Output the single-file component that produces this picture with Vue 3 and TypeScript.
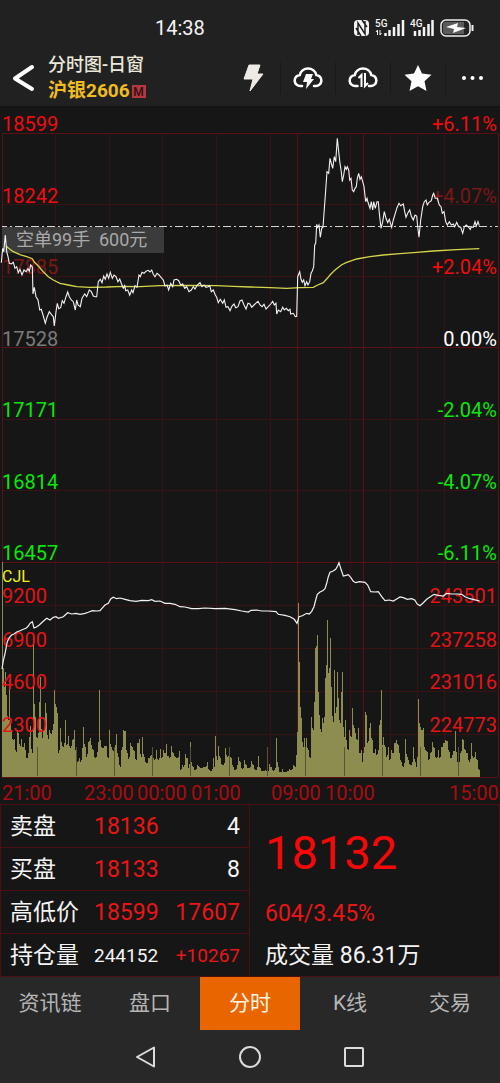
<script setup lang="ts">
import { ref } from 'vue'

type Point = [number, number]

/** Parses "x,y x,y ..." samples, stored at three units per chart pixel. */
function parse(samples: string, ox: number, oy: number): Point[] {
  return samples
    .trim()
    .split(/\s+/)
    .map((pair) => {
      const [x, y] = pair.split(',').map(Number)
      return [ox + x / 3, oy + y / 3] as Point
    })
}

function toPoints(list: Point[]): string {
  return list.map(([x, y]) => `${x.toFixed(1)},${y.toFixed(1)}`).join(' ')
}

// Chart area starts below the header; y is measured from its top edge.
const priceNight =
  '4,458 8,415 11,425 16,375 20,425 24,440 28,460 34,462 40,457 45,475 50,470 55,488 60,478 66,495 72,480 78,485 84,476 88,484 92,465 97,470 99,552 103,532 108,560 114,570 119,600 124,598 130,618 136,640 141,622 148,605 154,613 160,620 163,648 168,605 172,580 176,596 182,593 187,572 192,580 198,560 203,546 208,560 214,570 220,575 226,600 230,570 234,585 241,590 246,565 254,552 260,560 268,540 274,545 280,558 286,560 290,560 295,515 301,508 306,518 311,498 316,508 321,492 326,505 331,487 337,505 342,495 348,500 354,515 359,507 364,520 370,535 374,527 377,542 383,540 389,556 395,540 399,548 405,527 411,532 417,495 421,500 426,487 432,490 438,484 445,481 450,486 455,480 460,493 465,500 471,490 477,495 483,502 490,510 495,528 501,525 506,540 512,520 518,530 522,510 530,508 536,512 542,525 548,522 554,535 560,530 567,545 574,540 580,530 585,537 592,525 600,518 606,530 612,525 618,532 624,530 629,527 634,545 640,540 646,555 650,562 655,578 661,568 668,580 673,570 678,592 684,590 690,602 696,588 702,582 707,593 714,590 720,573 726,570 732,585 738,597 744,580'
const priceDay =
  '0,582 5,592 12,585 17,580 24,574 30,585 36,590 42,583 48,597 55,590 62,582 68,574 73,585 78,580 80,612 85,600 92,605 98,592 103,600 109,595 115,602 120,598 122,612 130,610 136,620 140,619 143,500 149,485 153,508 157,517 161,510 165,527 170,515 174,525 179,515 183,490 187,483 191,470 194,405 197,400 200,343 203,352 207,345 211,382 215,355 219,352 222,310 227,240 231,185 236,190 240,145 244,160 248,175 253,140 257,155 262,85 266,125 270,160 274,185 277,215 281,195 285,170 289,178 292,170 296,180 299,210 303,205 307,240 311,245 315,235 319,230 322,205 326,190 330,208 334,200 338,215 342,230 347,275 351,265 355,280 360,295 364,275 368,300 371,275 376,295 381,275 385,275 388,310 393,355 398,335 403,305 408,325 413,338 418,328 425,352 430,330 436,310 441,293 447,280 452,287 460,282 464,305 468,322 473,310 479,300 484,318 490,330 495,315 500,318 503,350 507,382 512,330 518,290 523,275 528,270 532,285 537,277 544,272 548,255 551,250 556,265 562,265 568,285 573,290 577,310 582,305 587,335 592,345 598,335 604,345 610,342 614,350 620,337 626,350 632,352 638,370 643,350 649,345 656,352 661,358 664,350 670,352 675,335 679,348 684,335 688,347'
const pricePoints = toPoints([...parse(priceNight, 0, 3), ...parse(priceDay, 250, 3)])

const averagePoints = toPoints([
  ...parse('18,408 26,415 40,425 60,434 80,440 97,446 103,456 115,468 130,485 145,500 160,510 180,520 205,525 230,530 270,532 320,531 370,529 420,530 480,527 560,526 650,527 700,529', 0, 3),
  ...parse('0,531 60,533 110,535 150,533 190,532 203,525 220,518 232,505 240,495 255,480 275,464 290,457 320,447 360,440 400,435 450,431 500,427 550,423 620,419 688,416', 250, 3),
])

const interestPoints = toPoints([
  ...parse('6,387 10,362 14,345 18,325 22,305 28,293 35,285 42,282 50,276 60,272 70,268 78,265 85,258 90,250 97,245 102,264 108,262 118,255 128,245 140,235 150,240 160,232 168,230 175,235 190,230 203,218 215,222 228,220 240,223 255,220 265,217 277,212 290,213 300,212 306,205 315,195 325,190 332,177 340,172 350,176 360,174 375,178 390,182 408,184 425,181 445,182 455,179 465,184 480,183 495,190', 0, 433),
  ...parse('15,190 30,193 45,200 60,201 80,206 100,206 120,204 150,206 180,205 210,209 230,213 250,216 258,211 275,210 290,213 310,213 333,215 340,223 360,226 375,230 388,238 396,250 402,230 412,227 425,220 433,222 440,214 447,200 452,180 457,163 465,156 473,152 480,146 485,130 490,110 495,97', 165, 433),
  ...parse('0,97 8,94 17,88 23,77 27,68 33,88 40,108 48,106 55,104 62,112 70,124 77,128 88,125 105,127 113,135 122,155 135,156 145,155 155,170 165,182 178,180 190,183 200,177 210,171 220,173 232,178 245,176 254,180 262,192 270,197 280,188 290,178 300,171 312,163 325,166 340,168 350,160 365,162 380,162 395,163 405,170 420,176 432,179 449,183', 330, 433),
])

const volumeSamples: Point[] = [
  ...parse('8,65 12,440 16,395 20,465 24,540 29,420 34,570 40,600 44,598 48,637 52,570 56,580 60,618 64,598 68,622 72,608 76,630 80,655 84,640 88,590 92,558 96,640 99,285 105,530 109,590 113,595 118,487 122,410 127,595 131,570 136,490 140,520 145,597 149,570 153,582 158,570 163,450 168,500 172,520 176,640 180,565 185,605 190,620 195,540 200,615 205,587 210,625 214,618 218,600 223,570 228,640 233,665 237,655 241,665 246,625 250,560 255,620 260,650 264,605 270,595 275,615 280,630 286,655 292,635 297,450 302,600 306,625 312,617 318,618 324,655 329,570 334,620 340,632 345,615 349,583 354,650 360,680 365,630 370,570 377,572 382,640 386,658 391,610 397,620 403,632 408,660 413,610 418,597 424,650 428,590 433,650 438,670 445,655 450,648 458,620 463,660 469,630 475,660 480,628 485,655 490,630 496,640', 0, 433),
  ...parse('5,612 12,655 18,618 24,640 30,650 36,655 42,633 47,690 52,675 56,680 61,642 66,655 71,685 75,605 80,665 86,680 92,690 98,675 104,680 110,685 116,682 122,680 128,667 134,690 140,692 144,653 148,680 152,588 157,660 161,617 166,655 172,675 177,668 182,623 187,650 192,635 198,655 204,680 210,690 216,675 221,652 227,665 233,688 239,660 245,675 252,685 259,663 265,675 272,690 277,680 281,648 287,685 292,693 300,690 306,695 312,672 318,682 324,692 330,685 335,594 340,680 346,697 352,688 358,697 365,695 372,688 378,690 384,675 390,680 395,645 399,190 402,365 406,500 410,535 414,620 418,595 422,640 425,593 430,630 436,655 440,530 445,570 449,485 452,325 456,285 460,455 464,525 468,575 472,535 476,550 480,415 484,375 487,240 491,400', 165, 433),
  ...parse('1,295 5,440 9,545 13,390 17,520 22,395 26,475 30,550 34,455 38,395 42,590 46,540 50,600 55,630 59,570 63,590 68,505 72,565 77,580 81,600 85,565 89,640 93,630 97,665 101,640 105,515 109,525 113,610 117,565 121,550 126,600 130,640 135,628 140,645 144,630 149,555 153,450 157,615 161,590 165,620 170,650 174,622 179,660 184,630 189,640 194,610 199,600 204,615 209,640 214,665 220,680 226,597 231,650 236,660 241,675 246,665 250,620 255,665 260,680 265,478 270,560 275,570 280,565 285,630 291,635 296,660 302,640 308,605 313,625 318,655 324,630 329,655 335,622 340,610 346,600 352,603 357,635 362,655 368,645 375,573 380,635 385,670 390,640 396,597 401,600 406,630 412,640 418,665 424,610 430,655 436,635 442,660 447,690', 330, 433),
]

const base = 670
/** One column per pixel: samples keep their height, columns between lean to the lower neighbour. */
function buildVolume(): string {
  const tops = new Map<number, number>()
  for (const [x, y] of volumeSamples) {
    const column = Math.floor(x)
    tops.set(column, Math.min(tops.get(column) ?? base, y))
  }
  const filled = [...tops.keys()].sort((a, b) => a - b)
  let path = ''
  for (let i = 0; i < filled.length; i++) {
    const x = filled[i]
    const top = tops.get(x)!
    path += `M${x} ${base}V${top.toFixed(1)}h1V${base}z`
    const next = filled[i + 1]
    if (next === undefined) continue
    const other = tops.get(next)!
    const low = Math.max(top, other) * 0.85 + Math.min(top, other) * 0.15
    for (let gap = x + 1; gap < next; gap++) {
      path += `M${gap} ${base}V${low.toFixed(1)}h1V${base}z`
    }
  }
  return path
}
const volumePath = buildVolume()

const rows = [26, 97, 169, 240, 312, 383, 455, 498, 541, 584, 627, 670]
const strongRows = [26, 240, 455, 670]
const columns = [55, 109, 162, 216, 270, 350, 390, 417, 444]
const strongColumns = [2, 297, 363, 498]
const sessionMarks = [37, 76, 114, 152, 190, 229, 267, 305, 344, 382, 420, 458]

const priceAxis = [
  { y: 24, price: '18599', percent: '+6.11%', tone: 'up', side: 'up' },
  { y: 96, price: '18242', percent: '+4.07%', tone: 'up', side: 'dim' },
  { y: 167, price: '17885', percent: '+2.04%', tone: 'dim', side: 'up' },
  { y: 239, price: '17528', percent: '0.00%', tone: 'flat', side: 'white' },
  { y: 310, price: '17171', percent: '-2.04%', tone: 'down', side: 'down' },
  { y: 382, price: '16814', percent: '-4.07%', tone: 'down', side: 'down' },
  { y: 453, price: '16457', percent: '-6.11%', tone: 'down', side: 'down' },
]
const volumeAxis = [
  { y: 496, left: '9200', right: '243501' },
  { y: 540, left: '6900', right: '237258' },
  { y: 582, left: '4600', right: '231016' },
  { y: 625, left: '2300', right: '224773' },
]
const timeAxis = [
  { x: 2, text: '21:00' },
  { x: 84, text: '23:00' },
  { x: 137, text: '00:00' },
  { x: 191, text: '01:00' },
  { x: 271, text: '09:00' },
  { x: 325, text: '10:00' },
  { x: 449, text: '15:00' },
]

const quotes = [
  { name: '卖盘', value: '18136', extra: '4', kind: 'depth' },
  { name: '买盘', value: '18133', extra: '8', kind: 'depth' },
  { name: '高低价', value: '18599', extra: '17607', kind: 'range' },
  { name: '持仓量', value: '244152', extra: '+10267', kind: 'holding' },
]

const tabs = ['资讯链', '盘口', '分时', 'K线', '交易']
const activeTab = ref('分时')
</script>

<template>
  <div class="screen">
    <div class="status">
      <time class="clock">14:38</time>
      <svg class="indicators" width="120" height="20" viewBox="0 0 120 20" aria-label="NFC 5G 4G">
        <rect x="0" y="2" width="15" height="16" rx="4" fill="#f4f4f4" />
        <path d="M4 17V5l7 11V3M8 2l5 7M2 10l5 8" fill="none" stroke="#202020" stroke-width="1.500" />
        <text x="21" y="9" class="net">5G</text>
        <path d="M23.500 12v5M22 14l1.500-2M26 12v5l1.500-2" stroke="#f4f4f4" fill="none" />
        <path d="M31.500 18v-3M35.500 18v-6M40 18V9M44.500 18V6M49 18V2" stroke="#f4f4f4" stroke-width="2.500" fill="none" />
        <text x="56" y="9" class="net">4G</text>
        <path d="M61 18v-5M65.500 18v-6M70 18V9M74.500 18V6M78.500 18V2" stroke="#f4f4f4" stroke-width="2.500" fill="none" />
        <rect x="87" y="2" width="29" height="16" rx="5" fill="#242424" stroke="#f0f0f0" stroke-width="1.500" />
        <path d="M91 4h19v12H91a2 2 0 0 1-2-2V6a2 2 0 0 1 2-2z" fill="#5b5b5b" />
        <path d="M92 9l12-4-1 4 9 1-13 5 1-4z" fill="#fff" />
        <path d="M118.500 7v6" stroke="#f0f0f0" stroke-width="2" />
      </svg>
    </div>

    <header class="header">
      <button class="back" type="button" aria-label="返回">
        <svg width="24" height="30" viewBox="0 0 24 30"><path d="M20 4L3 15.500 20 26" fill="none" stroke="#fff" stroke-width="4" stroke-linecap="round" stroke-linejoin="round" /></svg>
      </button>
      <div class="heading">
        <h1 class="title">分时图-日窗</h1>
        <div class="contract"><span>沪银2606</span><span class="badge">M</span></div>
      </div>
      <nav class="tools">
        <button type="button" aria-label="闪电下单">
          <svg width="32" height="32" viewBox="0 0 32 32"><path d="M12 3h11l-3 9h6L13 29l3-12H7z" fill="#eeebe6" stroke="#eeebe6" stroke-linejoin="round" /></svg>
        </button>
        <button type="button" aria-label="云条件单">
          <svg width="32" height="32" viewBox="0 0 32 32">
            <path d="M10 24H8.500a5.500 5.500 0 0 1-.7-11 8.500 8.500 0 0 1 16.500 0A5.500 5.500 0 0 1 23.500 24H22" fill="none" stroke="#fff" stroke-width="2.500" stroke-linecap="round" />
            <path d="M14 12h7l-2 5h3l-8 10 1-7h-4z" fill="#fff" />
          </svg>
        </button>
        <button type="button" aria-label="云同步">
          <svg width="32" height="32" viewBox="0 0 32 32">
            <path d="M10.500 24H8.500a5.500 5.500 0 0 1-.7-11 8.500 8.500 0 0 1 16.500 0A5.500 5.500 0 0 1 23.500 24H22" fill="none" stroke="#fff" stroke-width="2.500" stroke-linecap="round" />
            <path d="M14.500 25V13l-3 3M18 11v13l3-3" fill="none" stroke="#fff" stroke-width="2" />
          </svg>
        </button>
        <button type="button" aria-label="收藏">
          <svg width="32" height="32" viewBox="0 0 32 32"><path d="M16 3l4 8.500 9.500 1.200-7 6.500L24.500 29 16 24.300 7.500 29l2-9.800-7-6.500L12 11.500z" fill="#fff" /></svg>
        </button>
        <button type="button" aria-label="更多">
          <svg width="32" height="32" viewBox="0 0 32 32" fill="#fff"><circle cx="7" cy="16" r="2" /><circle cx="15.500" cy="16" r="2" /><circle cx="24" cy="16" r="2" /></svg>
        </button>
      </nav>
    </header>

    <main>
      <svg class="chart" viewBox="0 0 500 697" role="img" aria-label="分时图">
        <g class="grid" shape-rendering="crispEdges">
          <line v-for="y in rows" :key="'r' + y" x1="2" :y1="y" x2="498" :y2="y" :class="{ strong: strongRows.includes(y) }" />
          <line v-for="x in columns" :key="'c' + x" :x1="x" y1="26" :x2="x" y2="670" />
          <line v-for="x in strongColumns" :key="'s' + x" :x1="x" y1="26" :x2="x" y2="670" class="strong" />
        </g>
        <g v-for="row in priceAxis" :key="row.price" class="axis">
          <text x="2" :y="row.y" :class="row.tone">{{ row.price }}</text>
          <text x="497" :y="row.y" text-anchor="end" :class="row.side">{{ row.percent }}</text>
        </g>
        <text x="2" y="475" class="indicator">CJL</text>

        <path :d="volumePath" fill="#8e8d50" shape-rendering="crispEdges" />
        <g class="marks" shape-rendering="crispEdges">
          <line v-for="x in sessionMarks" :key="x" :x1="x" y1="640" :x2="x" y2="669" />
        </g>
        <g v-for="row in volumeAxis" :key="row.left" class="volume">
          <text x="2" :y="row.y">{{ row.left }}</text>
          <text x="497" :y="row.y" text-anchor="end">{{ row.right }}</text>
        </g>
        <g class="times">
          <text v-for="mark in timeAxis" :key="mark.text" :x="mark.x" y="693">{{ mark.text }}</text>
        </g>

        <rect x="2" y="120" width="162" height="26" fill="#3b3b3b" />
        <text x="16" y="139" class="order">空单99手</text>
        <text x="99" y="139" class="order">600元</text>
        <line x1="2" y1="119.500" x2="498" y2="119.500" stroke="#d4d4cc" stroke-dasharray="8 3 2 3" stroke-dashoffset="3" />
        <polyline :points="averagePoints" fill="none" stroke="#d5d54c" stroke-width="1.300" />
        <polyline :points="pricePoints" fill="none" stroke="#f2f2f2" stroke-width="1.100" />
        <polyline :points="interestPoints" fill="none" stroke="#f2f2f2" stroke-width="1.200" />
      </svg>

      <section class="panel">
        <table class="quotes">
          <tbody>
            <tr v-for="quote in quotes" :key="quote.name" :class="quote.kind">
              <th scope="row">{{ quote.name }}</th>
              <td class="value">{{ quote.value }}</td>
              <td class="extra">{{ quote.extra }}</td>
            </tr>
          </tbody>
        </table>
        <div class="summary">
          <strong class="last">18132</strong>
          <span class="change">604/3.45%</span>
          <span class="turnover">成交量 86.31万</span>
        </div>
      </section>
    </main>

    <nav class="tabs">
      <button v-for="tab in tabs" :key="tab" type="button" :class="{ active: tab === activeTab }" @click="activeTab = tab">{{ tab }}</button>
    </nav>

    <div class="system">
      <button type="button" aria-label="Back"><svg width="24" height="24" viewBox="0 0 24 24"><path d="M20 2.500v19L3 12z" /></svg></button>
      <button type="button" aria-label="Home"><svg width="24" height="24" viewBox="0 0 24 24"><circle cx="12" cy="12" r="10" /></svg></button>
      <button type="button" aria-label="Recents"><svg width="24" height="24" viewBox="0 0 24 24"><rect x="3" y="3" width="18" height="18" rx="1" /></svg></button>
    </div>
  </div>
</template>

<style>
body {
  margin: 0;
  background: #282828;
}
</style>

<style scoped>
.screen {
  background: #161616;
  color: #f4f4f4;
  font-family: Roboto, "Noto Sans CJK SC", sans-serif;
}
button {
  display: flex;
  align-items: center;
  justify-content: center;
  padding: 0;
  border: 0;
  background: none;
  color: inherit;
  font: inherit;
  cursor: pointer;
}
.status {
  display: flex;
  align-items: center;
  justify-content: space-between;
  box-sizing: border-box;
  height: 50px;
  padding-top: 6px;
  background: #212121;
}
.clock {
  margin-left: 31%;
  font-size: 20px;
  line-height: 24px;
}
.indicators {
  margin-right: 26px;
}
.net {
  font-size: 10px;
  font-weight: 500;
  fill: #f4f4f4;
}
.header {
  display: flex;
  align-items: center;
  box-sizing: border-box;
  height: 57px;
  padding: 0 0 0 12px;
  border-bottom: 1px solid #141414;
  background: #212121;
}
.heading {
  margin-left: 12px;
  flex: 1;
}
.title {
  margin: 0;
  color: #ece8da;
  font-size: 18px;
  font-weight: 500;
  line-height: 26px;
}
.contract {
  display: flex;
  align-items: center;
  gap: 2px;
  color: #efbd22;
  font-size: 19px;
  font-weight: 700;
  line-height: 26px;
}
.badge {
  width: 14px;
  height: 13px;
  background: #b5383e;
  color: #2b1010;
  font-size: 12px;
  font-weight: 500;
  line-height: 14px;
  text-align: center;
}
.tools {
  display: flex;
}
.tools button {
  box-sizing: border-box;
  width: 55px;
  height: 32px;
}
.tools button + button {
  border-left: 1px solid #191919;
}
.chart {
  display: block;
  width: 100%;
  height: auto;
}
.grid line {
  stroke: #391214;
}
.grid .strong {
  stroke: #5c1013;
}
.axis text,
.volume text,
.times text {
  font-size: 20px;
}
.up {
  fill: #f00d0d;
}
.dim {
  fill: #7c1717;
}
.flat {
  fill: #7a7a7a;
}
.white {
  fill: #fff;
}
.down {
  fill: #0be60b;
}
.indicator {
  fill: #f0f01a;
  font-size: 16px;
}
.marks line {
  stroke: #55552f;
}
.volume text {
  fill: #e41414;
}
.times text {
  fill: #a90c10;
}
.order {
  fill: #a9a9a9;
  font-size: 18px;
}
.panel {
  display: flex;
  border: 1px solid #4c1013;
}
.quotes {
  width: 50%;
  border-right: 1px solid #4c1013;
  border-collapse: collapse;
  font-size: 23px;
  line-height: 24px;
}
.quotes tr + tr {
  border-top: 1px solid #4c1013;
}
.quotes th,
.quotes td {
  height: 41px;
  padding: 1px 0 0;
  font-weight: 400;
  text-align: left;
  white-space: nowrap;
}
.quotes th {
  width: 84px;
  padding-left: 9px;
}
.quotes .value {
  width: 66px;
}
.quotes .extra {
  padding-right: 9px;
  text-align: right;
}
.depth .value,
.range td,
.holding .extra {
  color: #ea1515;
}
.holding td {
  font-size: 19px;
}
.summary {
  display: flex;
  flex: 1;
  flex-direction: column;
  justify-content: space-between;
  padding: 20px 15px 6px;
  font-size: 23px;
  line-height: 28px;
}
.last {
  color: #f50808;
  font-size: 47px;
  font-weight: 400;
  line-height: 56px;
}
.change {
  padding-top: 4px;
  color: #ea1515;
}
.tabs {
  display: grid;
  grid-template-columns: repeat(5, 1fr);
  height: 53px;
  background: #282828;
  color: #b5b5b5;
  font-size: 21px;
}
.tabs button {
  padding-bottom: 6px;
}
.tabs .active {
  background: #e86500;
  color: #fff5e4;
}
.system {
  display: flex;
  align-items: center;
  justify-content: center;
  gap: 80px;
  height: 53px;
  background: #282828;
}
.system svg {
  fill: none;
  stroke: #dcdcdc;
  stroke-width: 2px;
  stroke-linejoin: round;
}
</style>
